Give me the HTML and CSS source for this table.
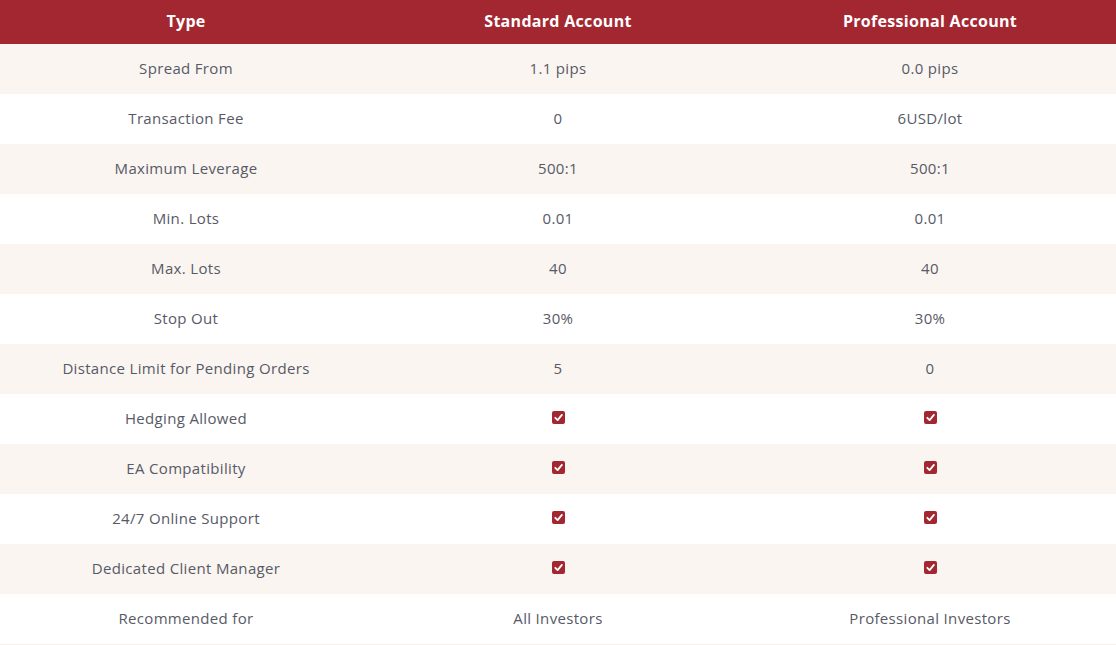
FILE: index.html
```html
<!DOCTYPE html>
<html>
<head>
<meta charset="utf-8">
<link rel="stylesheet" href="styles.css">
</head>
<body>
<table class="cmp">
  <thead>
    <tr><th>Type</th><th>Standard Account</th><th>Professional Account</th></tr>
  </thead>
  <tbody>
    <tr><td>Spread From</td><td>1.1 pips</td><td>0.0 pips</td></tr>
    <tr><td>Transaction Fee</td><td>0</td><td>6USD/lot</td></tr>
    <tr><td>Maximum Leverage</td><td>500:1</td><td>500:1</td></tr>
    <tr><td>Min. Lots</td><td>0.01</td><td>0.01</td></tr>
    <tr><td>Max. Lots</td><td>40</td><td>40</td></tr>
    <tr><td>Stop Out</td><td>30%</td><td>30%</td></tr>
    <tr><td>Distance Limit for Pending Orders</td><td>5</td><td>0</td></tr>
    <tr><td>Hedging Allowed</td><td><span class="chk"><svg viewBox="0 0 13 13"><rect width="13" height="13" rx="2"/><path d="M3.3 6.8 L5.6 9.1 L9.9 3.9"/></svg></span></td><td><span class="chk"><svg viewBox="0 0 13 13"><rect width="13" height="13" rx="2"/><path d="M3.3 6.8 L5.6 9.1 L9.9 3.9"/></svg></span></td></tr>
    <tr><td>EA Compatibility</td><td><span class="chk"><svg viewBox="0 0 13 13"><rect width="13" height="13" rx="2"/><path d="M3.3 6.8 L5.6 9.1 L9.9 3.9"/></svg></span></td><td><span class="chk"><svg viewBox="0 0 13 13"><rect width="13" height="13" rx="2"/><path d="M3.3 6.8 L5.6 9.1 L9.9 3.9"/></svg></span></td></tr>
    <tr><td>24/7 Online Support</td><td><span class="chk"><svg viewBox="0 0 13 13"><rect width="13" height="13" rx="2"/><path d="M3.3 6.8 L5.6 9.1 L9.9 3.9"/></svg></span></td><td><span class="chk"><svg viewBox="0 0 13 13"><rect width="13" height="13" rx="2"/><path d="M3.3 6.8 L5.6 9.1 L9.9 3.9"/></svg></span></td></tr>
    <tr><td>Dedicated Client Manager</td><td><span class="chk"><svg viewBox="0 0 13 13"><rect width="13" height="13" rx="2"/><path d="M3.3 6.8 L5.6 9.1 L9.9 3.9"/></svg></span></td><td><span class="chk"><svg viewBox="0 0 13 13"><rect width="13" height="13" rx="2"/><path d="M3.3 6.8 L5.6 9.1 L9.9 3.9"/></svg></span></td></tr>
    <tr><td>Recommended for</td><td>All Investors</td><td>Professional Investors</td></tr>
  </tbody>
</table>
</body>
</html>
```
FILE: styles.css
```css
html, body { margin: 0; padding: 0; background: #fff; }
.cmp {
  width: 1116px;
  border-collapse: collapse;
  table-layout: fixed;
  font-family: "Open Sans", "Liberation Sans", sans-serif;
  border-bottom: 1px solid #f7efe9;
}
.cmp th {
  background: #a32731;
  color: #fff;
  font-weight: 700;
  font-size: 16px;
  letter-spacing: 0.3px;
  height: 42px;
  padding: 0 0 2px;
  text-align: center;
}
.cmp td {
  height: 48px;
  padding: 0 0 2px;
  text-align: center;
  font-size: 15px;
  letter-spacing: 0.33px;
  color: #575a66;
}
.cmp tbody tr:nth-child(odd) td { background: #faf5f1; }
.chk { display: inline-block; width: 13px; height: 13px; vertical-align: middle; margin-bottom: 4px; }
.chk svg { display: block; width: 13px; height: 13px; }
.chk rect { fill: #a32731; }
.chk path { fill: none; stroke: #fff; stroke-width: 1.8; stroke-linecap: round; stroke-linejoin: round; }
```
